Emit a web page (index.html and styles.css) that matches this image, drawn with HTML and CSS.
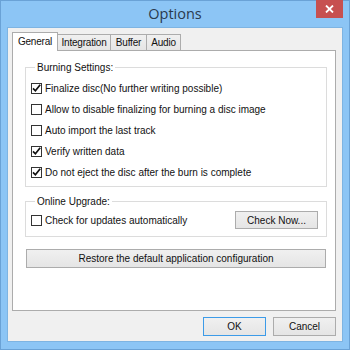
FILE: index.html
```html
<!DOCTYPE html>
<html>
<head>
<meta charset="utf-8">
<link rel="stylesheet" href="styles.css">
</head>
<body>
<div class="window">
  <div class="titlebar">
    <span class="spacer"></span>
    <span class="title">Options</span>
    <span class="close"><svg width="9" height="8" viewBox="0 0 9 8"><path d="M1 0.5 L8 7.5 M8 0.5 L1 7.5" stroke="#fff" stroke-width="1.8"/></svg></span>
  </div>
  <div class="client">
    <div class="tabs">
      <div class="tab active">General</div>
      <div class="tab">Integration</div>
      <div class="tab">Buffer</div>
      <div class="tab">Audio</div>
    </div>
    <div class="panel">
      <fieldset class="group burning">
        <legend>Burning Settings:</legend>
        <div class="row"><span class="cb checked"><svg width="11" height="11" viewBox="0 0 11 11"><path d="M2 5.3 L4.4 7.8 L9.2 1.8" fill="none" stroke="#111" stroke-width="1.7"/></svg></span><span>Finalize disc(No further writing possible)</span></div>
        <div class="row"><span class="cb"></span><span>Allow to disable finalizing for burning a disc image</span></div>
        <div class="row"><span class="cb"></span><span>Auto import the last track</span></div>
        <div class="row"><span class="cb checked"><svg width="11" height="11" viewBox="0 0 11 11"><path d="M2 5.3 L4.4 7.8 L9.2 1.8" fill="none" stroke="#111" stroke-width="1.7"/></svg></span><span>Verify written data</span></div>
        <div class="row"><span class="cb checked"><svg width="11" height="11" viewBox="0 0 11 11"><path d="M2 5.3 L4.4 7.8 L9.2 1.8" fill="none" stroke="#111" stroke-width="1.7"/></svg></span><span>Do not eject the disc after the burn is complete</span></div>
      </fieldset>
      <fieldset class="group online">
        <legend>Online Upgrade:</legend>
        <div class="row2">
          <div class="row"><span class="cb"></span><span>Check for updates automatically</span></div>
          <div class="btn check">Check Now...</div>
        </div>
      </fieldset>
      <div class="btn restore">Restore the default application configuration</div>
    </div>
    <div class="footer">
      <div class="btn ok">OK</div>
      <div class="btn">Cancel</div>
    </div>
  </div>
</div>
</body>
</html>
```

FILE: styles.css
```css
* { box-sizing: border-box; }
html, body { margin: 0; padding: 0; background: #88c3f3; }
body {
  font-family: "Liberation Sans", Arial, sans-serif;
  font-size: 10px;
  color: #111;
}
.window {
  width: 350px;
  height: 350px;
  background: #8cc5f5;
  border: 1px solid #6aa2d6;
  padding: 0 6px 7px 6px;
  display: flex;
  flex-direction: column;
}
.titlebar {
  height: 26px;
  display: grid;
  grid-template-columns: 1fr auto 1fr;
  align-items: start;
}
.title {
  font-family: "Open Sans", "Liberation Sans", sans-serif;
  font-size: 14.5px;
  color: #2a3a4e;
  line-height: 16px;
  margin-top: 5px;
}
.close {
  justify-self: end;
  width: 27px;
  height: 18px;
  margin-top: -1px;
  background: #c75050;
  display: flex;
  align-items: center;
  justify-content: center;
}
.client {
  flex: 1;
  background: #f0f0f0;
  border: 1px solid #7eb4e2;
  padding: 4px 6px 0 4px;
  display: flex;
  flex-direction: column;
}
.tabs {
  display: flex;
  align-items: flex-end;
  height: 18px;
  position: relative;
  z-index: 1;
}
.tab {
  height: 16px;
  border: 1px solid #acacac;
  border-bottom: none;
  background: linear-gradient(#f0f0f0, #e5e5e5);
  display: flex;
  justify-content: center;
  align-items: center;
  padding: 0;
  margin-left: -1px;
  white-space: nowrap;
  letter-spacing: -0.2px;
}
.tab:first-child { margin-left: 0; }
.tab.active {
  height: 19px;
  background: #fff;
  margin-bottom: -1px;
  padding-bottom: 2px;
  width: 46px;
}
.tab:nth-child(2) { width: 54px; }
.tab:nth-child(3) { width: 37px; }
.tab:nth-child(4) { width: 35px; }
.panel {
  width: 324px;
  height: 261px;
  background: #fff;
  border: 1px solid #acacac;
  padding: 10px 0 0 12px;
}
.group {
  margin: 0;
  width: 302px;
  border: 1px solid #dcdcdc;
  min-width: 0;
}
.group legend {
  padding: 0 2px;
  margin-left: 4px;
  line-height: 13px;
}
.burning { padding: 4px 0 3px 5px; }
.online { margin-top: 8px; padding: 3px 8px 7px 5px; }
.row {
  height: 21px;
  display: flex;
  align-items: center;
  gap: 3px;
  white-space: nowrap;
}
.row2 {
  height: 18px;
  display: flex;
  align-items: center;
  justify-content: space-between;
}
.row2 .row { height: 18px; }
.cb {
  width: 11px;
  height: 11px;
  border: 1px solid #333;
  background: #fff;
  flex: none;
}
.cb svg { display: block; margin: -1px 0 0 -1px; }
.btn {
  height: 19px;
  border: 1px solid #acacac;
  background: linear-gradient(#f0f0f0, #e5e5e5);
  display: flex;
  align-items: center;
  justify-content: center;
  white-space: nowrap;
}
.check { width: 83px; height: 18px; }
.restore { width: 300px; margin-top: 12px; margin-left: 1px; }
.footer {
  display: flex;
  justify-content: flex-end;
  gap: 7px;
  padding-top: 6px;
}
.footer .btn { width: 63px; }
.btn.ok { border-color: #3c9be8; }
```
